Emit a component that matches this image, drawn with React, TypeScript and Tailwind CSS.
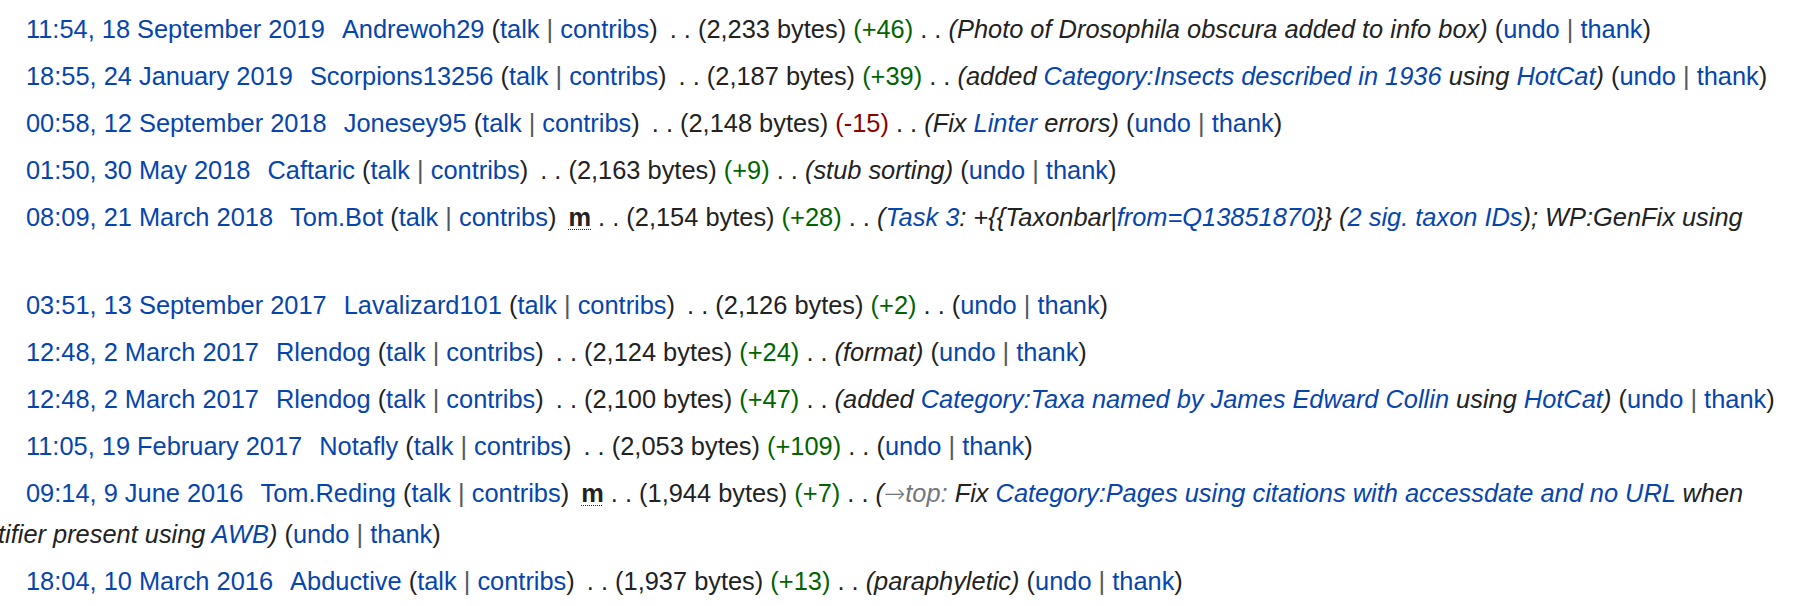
import React from 'react';

type Row = {
  date: string;
  user: string;
  size: string;
  diff: string;
  minor?: boolean;
  comment?: React.ReactNode;
  // text that wraps onto a second line (starts off the left edge)
  wrap?: React.ReactNode;
  blankWrap?: boolean;
};

const A = ({ children }: { children: React.ReactNode }) => (
  <a className="text-[#0645ad] cursor-pointer">{children}</a>
);

const Links = ({ a, b }: { a: string; b: string }) => (
  <span>
    (<A>{a}</A> <span className="text-[#54595d]">|</span> <A>{b}</A>)
  </span>
);

const rows: Row[] = [
  {
    date: '11:54, 18 September 2019',
    user: 'Andrewoh29',
    size: '2,233',
    diff: '+46',
    comment: <>(Photo of Drosophila obscura added to info box)</>,
  },
  {
    date: '18:55, 24 January 2019',
    user: 'Scorpions13256',
    size: '2,187',
    diff: '+39',
    comment: (
      <>
        (added <A>Category:Insects described in 1936</A> using <A>HotCat</A>)
      </>
    ),
  },
  {
    date: '00:58, 12 September 2018',
    user: 'Jonesey95',
    size: '2,148',
    diff: '-15',
    comment: (
      <>
        (Fix <A>Linter</A> errors)
      </>
    ),
  },
  {
    date: '01:50, 30 May 2018',
    user: 'Caftaric',
    size: '2,163',
    diff: '+9',
    comment: <>(stub sorting)</>,
  },
  {
    date: '08:09, 21 March 2018',
    user: 'Tom.Bot',
    size: '2,154',
    diff: '+28',
    minor: true,
    comment: (
      <>
        (<A>Task 3</A>: +{'{{'}Taxonbar|<A>from=Q13851870</A>{'}}'} (<A>2 sig. taxon IDs</A>); WP:GenFix using
      </>
    ),
    blankWrap: true,
  },
  { date: '03:51, 13 September 2017', user: 'Lavalizard101', size: '2,126', diff: '+2' },
  {
    date: '12:48, 2 March 2017',
    user: 'Rlendog',
    size: '2,124',
    diff: '+24',
    comment: <>(format)</>,
  },
  {
    date: '12:48, 2 March 2017',
    user: 'Rlendog',
    size: '2,100',
    diff: '+47',
    comment: (
      <>
        (added <A>Category:Taxa named by James Edward Collin</A> using <A>HotCat</A>)
      </>
    ),
  },
  { date: '11:05, 19 February 2017', user: 'Notafly', size: '2,053', diff: '+109' },
  {
    date: '09:14, 9 June 2016',
    user: 'Tom.Reding',
    size: '1,944',
    diff: '+7',
    minor: true,
    comment: (
      <>
        (
        <span className="text-[#72777d]">
          <span className="font-['DejaVu_Sans',sans-serif] not-italic font-light">→</span>top:
        </span>{' '}
        Fix <A>Category:Pages using citations with accessdate and no URL</A> when
      </>
    ),
    wrap: (
      <>
        <span className="italic">
          identifier present using <A>AWB</A>)
        </span>{' '}
        <Links a="undo" b="thank" />
      </>
    ),
  },
  {
    date: '18:04, 10 March 2016',
    user: 'Abductive',
    size: '1,937',
    diff: '+13',
    comment: <>(paraphyletic)</>,
  },
];

function HistoryRow({ r }: { r: Row }) {
  const neg = r.diff.startsWith('-');
  const wraps = r.wrap || r.blankWrap;
  return (
    <li className="mb-[5.3px] list-none">
      <div className="pl-[26px] whitespace-nowrap">
        <A>{r.date}</A>{' '}
        <span className="ml-[10px] mr-[5px]">
          <A>{r.user}</A> <Links a="talk" b="contribs" />
        </span>{' '}
        {r.minor && (
          <>
            <abbr className="font-bold no-underline">
              <span className="underline decoration-dotted decoration-1 underline-offset-[3px]">m</span>
            </abbr>{' '}
          </>
        )}
        <span>. .</span> <span>({r.size} bytes)</span>{' '}
        <span className={neg ? 'text-[#8b0000]' : 'text-[#006400]'}>({r.diff})</span>{' '}
        <span>. .</span>{' '}
        {r.comment && (
          <>
            <span className="italic">{r.comment}</span>
            {!wraps && ' '}
          </>
        )}
        {!wraps && <Links a="undo" b="thank" />}
      </div>
      {r.wrap && <div className="-ml-[50px] whitespace-nowrap">{r.wrap}</div>}
      {r.blankWrap && <div>&nbsp;</div>}
    </li>
  );
}

export default function App() {
  return (
    <div className="w-[1814px] h-[606px] overflow-hidden bg-white text-[#222222] font-['Liberation_Sans',Arial,sans-serif] text-[25.4px] leading-[41.6px]">
      <ul className="pt-[9px] m-0 p-0">
        {rows.map((r, i) => (
          <HistoryRow key={i} r={r} />
        ))}
      </ul>
    </div>
  );
}
